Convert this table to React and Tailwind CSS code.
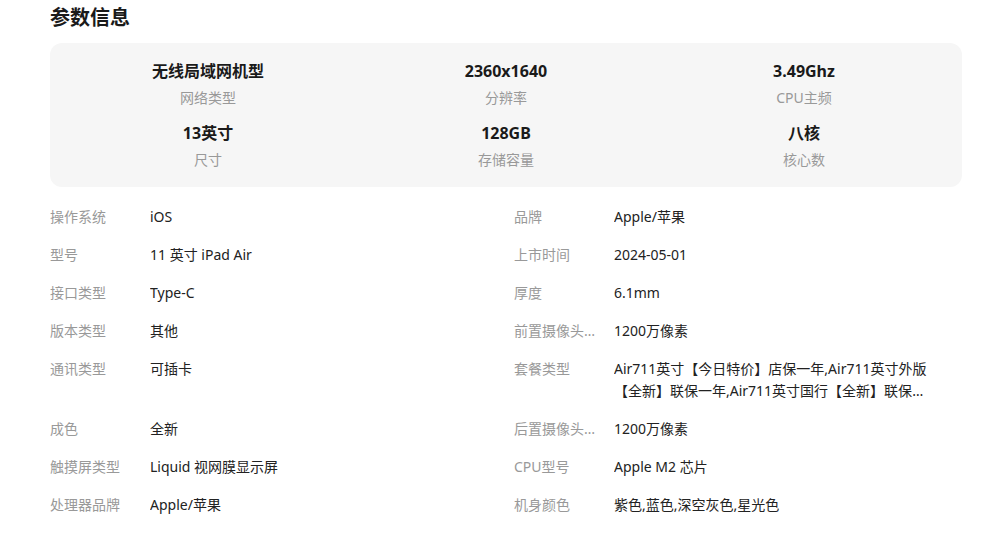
import React from "react";

const stats = [
  { v: "无线局域网机型", l: "网络类型" },
  { v: "2360x1640", l: "分辨率" },
  { v: "3.49Ghz", l: "CPU主频" },
  { v: "13英寸", l: "尺寸" },
  { v: "128GB", l: "存储容量" },
  { v: "八核", l: "核心数" },
];

const specs = [
  ["操作系统", "iOS"],
  ["品牌", "Apple/苹果"],
  ["型号", "11 英寸 iPad Air"],
  ["上市时间", "2024-05-01"],
  ["接口类型", "Type-C"],
  ["厚度", "6.1mm"],
  ["版本类型", "其他"],
  ["前置摄像头像素", "1200万像素"],
  ["通讯类型", "可插卡"],
  ["套餐类型", "Air711英寸【今日特价】店保一年,Air711英寸外版【全新】联保一年,Air711英寸国行【全新】联保一年,Air711英寸国行【99新】店保一年"],
  ["成色", "全新"],
  ["后置摄像头像素", "1200万像素"],
  ["触摸屏类型", "Liquid 视网膜显示屏"],
  ["CPU型号", "Apple M2 芯片"],
  ["处理器品牌", "Apple/苹果"],
  ["机身颜色", "紫色,蓝色,深空灰色,星光色"],
];

export default function App() {
  return (
    <div
      className="w-[986px] h-[546px] bg-white pl-[50px] pr-[24px] pt-[4px] overflow-hidden"
      style={{ fontFamily: '"Noto Sans", "Noto Sans CJK SC", sans-serif' }}
    >
      <h2 className="text-[20px] leading-[28px] font-bold text-[#1a1a1a]">参数信息</h2>
      <div className="mt-[11px] rounded-[12px] bg-[#f6f6f6] px-[9px] pt-[16px] pb-[16px] grid grid-cols-3 gap-y-[12px]">
        {stats.map((s) => (
          <div key={s.l} className="flex flex-col items-center">
            <div className="text-[16px] leading-[24px] font-bold text-[#1a1a1a]">{s.v}</div>
            <div className="mt-[4px] text-[14px] leading-[22px] text-[#999]">{s.l}</div>
          </div>
        ))}
      </div>
      <div className="mt-[19px] grid grid-cols-2 gap-x-4 gap-y-4">
        {specs.map(([k, v]) => (
          <div key={k} className="flex text-[14px] leading-[22px] pr-[32px]">
            <div className="w-[100px] shrink-0 pr-4 truncate text-[#999]">{k}</div>
            <div className="flex-1 min-w-0 line-clamp-2 text-[#222]">{v}</div>
          </div>
        ))}
      </div>
    </div>
  );
}
